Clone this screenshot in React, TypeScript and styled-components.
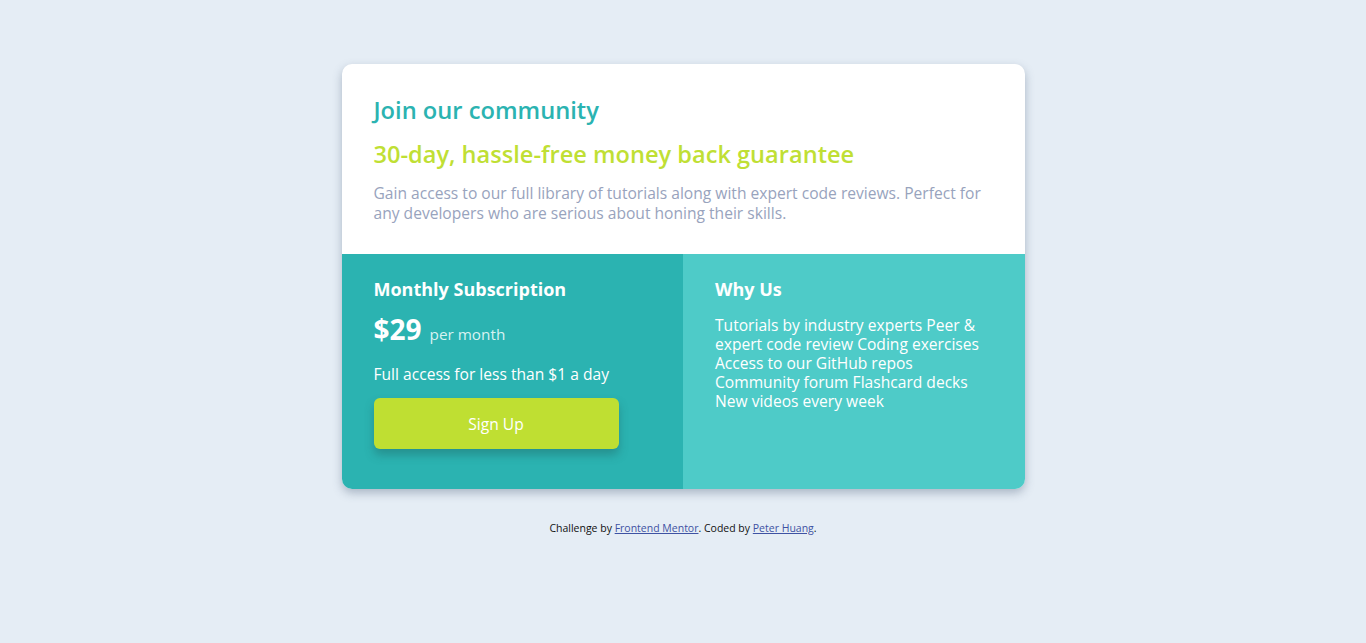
import React from 'react';
import styled, { createGlobalStyle } from 'styled-components';

const GlobalStyle = createGlobalStyle`
  html, body {
    margin: 0;
    padding: 0;
    background: #e5edf5;
    font-family: "Open Sans", Lato, sans-serif;
  }
`;

const WHY_US = 'Tutorials by industry experts Peer & expert code review Coding exercises Access to our GitHub repos Community forum Flashcard decks New videos every week';

const App: React.FC = () => {
  return (
    <>
      <GlobalStyle />
      <Page>
        <Card>
          <Intro>
            <Title>Join our community</Title>
            <Guarantee>30-day, hassle-free money back guarantee</Guarantee>
            <Description>
              Gain access to our full library of tutorials along with expert code reviews. Perfect for any developers who
              are serious about honing their skills.
            </Description>
          </Intro>
          <Bottom>
            <Panel $tone="dark">
              <PanelTitle>Monthly Subscription</PanelTitle>
              <PriceRow>
                <Price>$29</Price>
                <Period>per month</Period>
              </PriceRow>
              <Note>Full access for less than $1 a day</Note>
              <SignUp type="button">Sign Up</SignUp>
            </Panel>
            <Panel $tone="light">
              <PanelTitle>Why Us</PanelTitle>
              <WhyList>{WHY_US}</WhyList>
            </Panel>
          </Bottom>
        </Card>
        <Attribution>
          Challenge by <a href="#">Frontend Mentor</a>. Coded by <a href="#">Peter Huang</a>.
        </Attribution>
      </Page>
    </>
  );
};

export default App;

const Page = styled.main`
  display: flex;
  flex-direction: column;
  align-items: center;
  padding-top: 64px;
  min-height: 643px;
  box-sizing: border-box;
`;

const Card = styled.section`
  width: 683px;
  border-radius: 10px;
  overflow: hidden;
  background: #fff;
  box-shadow: 0 4px 10px rgba(60, 80, 110, 0.35);
`;

const Intro = styled.div`
  padding: 32px;
  height: 190px;
  box-sizing: border-box;
`;

const Title = styled.h1`
  margin: 0 0 17px;
  font-size: 23.7px;
  line-height: 28px;
  font-weight: 600;
  color: #2bb3b1;
`;

const Guarantee = styled.h2`
  margin: 0 0 16px;
  font-size: 23.6px;
  line-height: 26px;
  font-weight: 600;
  color: #c0df34;
`;

const Description = styled.p`
  margin: 0;
  max-width: 614px;
  font-size: 15.6px;
  line-height: 20px;
  color: #98a3bd;
`;

const Bottom = styled.div`
  display: grid;
  grid-template-columns: 1fr 1fr;
  height: 235px;
`;

const Panel = styled.div<{ $tone: 'dark' | 'light' }>`
  padding: 24px 32px;
  color: #fff;
  background: ${({ $tone }) => ($tone === 'dark' ? '#2bb3b1' : '#4ecbc8')};
`;

const PanelTitle = styled.h3`
  margin: 0 0 12px;
  font-size: 18px;
  line-height: 22px;
  font-weight: 700;
`;

const PriceRow = styled.div`
  display: flex;
  align-items: baseline;
  gap: 8px;
  margin-bottom: 18px;
`;

const Price = styled.span`
  font-size: 28px;
  line-height: 34px;
  font-weight: 700;
`;

const Period = styled.span`
  font-size: 15.3px;
  color: #d8f2f1;
`;

const Note = styled.p`
  margin: 0 0 14px;
  font-size: 15.6px;
  line-height: 20px;
`;

const SignUp = styled.button`
  width: 245px;
  height: 51px;
  border: none;
  border-radius: 6px;
  background: #bfdf32;
  color: #fff;
  font-family: inherit;
  font-size: 15.6px;
  box-shadow: 0 6px 10px rgba(30, 80, 80, 0.35);
  cursor: pointer;
`;

const WhyList = styled.p`
  margin: 0;
  padding-top: 4px;
  max-width: 272px;
  font-size: 15.6px;
  line-height: 19px;
`;

const Attribution = styled.footer`
  margin-top: 32px;
  font-size: 10.5px;
  color: #111;

  a {
    color: #3e52a3;
  }
`;
